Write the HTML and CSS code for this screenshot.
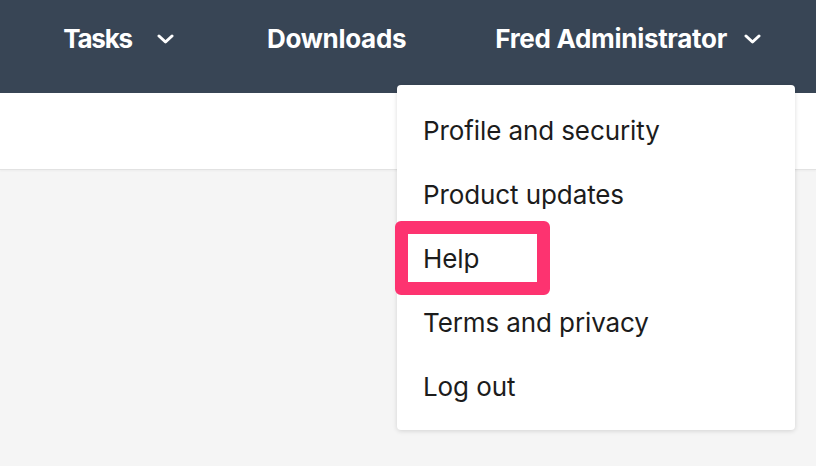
FILE: index.html
```html
<!DOCTYPE html>
<html lang="en">
<head>
<meta charset="utf-8">
<title>Menu</title>
<link rel="stylesheet" href="styles.css">
</head>
<body>
<header class="topbar">
  <nav class="nav">
    <div class="nav-item nav-tasks">
      <span class="nav-label">Tasks</span>
      <svg class="chev" width="17" height="10" viewBox="0 0 17 10"><path d="M2 2 L8.5 8 L15 2" fill="none" stroke="#fff" stroke-width="3" stroke-linecap="round" stroke-linejoin="round"/></svg>
    </div>
    <div class="nav-item nav-downloads"><span class="nav-label">Downloads</span></div>
    <div class="nav-item nav-user">
      <span class="nav-label">Fred Administrator</span>
      <svg class="chev" width="17" height="10" viewBox="0 0 17 10"><path d="M2 2 L8.5 8 L15 2" fill="none" stroke="#fff" stroke-width="3" stroke-linecap="round" stroke-linejoin="round"/></svg>
      <ul class="dropdown">
        <li>Profile and security</li>
        <li>Product updates</li>
        <li class="highlighted">Help</li>
        <li>Terms and privacy</li>
        <li>Log out</li>
      </ul>
    </div>
  </nav>
</header>
<div class="subbar"></div>
<main class="content"></main>
</body>
</html>
```
FILE: styles.css
```css
*, *::before, *::after { box-sizing: border-box; }
html, body {
  margin: 0;
  padding: 0;
  height: 100%;
}
body {
  background: #f5f5f5;
  font-family: Inter, "Noto Sans", sans-serif;
  color: #1c1c1c;
  overflow: hidden;
}
.topbar {
  height: 93px;
  background: #384555;
}
.nav {
  display: flex;
  justify-content: flex-end;
  align-items: center;
  height: 78px;
  padding-right: 55px;
}
.nav-item {
  display: flex;
  align-items: center;
  color: #fff;
  font-weight: 700;
  font-size: 26px;
  line-height: 30px;
  letter-spacing: -0.3px;
}
.nav-tasks .nav-label { letter-spacing: -1.2px; }
.nav-tasks .chev { margin-left: 25px; }
.nav-downloads { margin-left: 93px; }
.nav-user { margin-left: 89px; position: relative; }
.nav-user .chev { margin-left: 17px; }
.chev { display: block; }
.subbar {
  height: 77px;
  background: #fff;
  border-bottom: 1px solid #e2e2e2;
  box-shadow: 0 1px 2px rgba(0,0,0,0.04);
}
.dropdown {
  position: absolute;
  top: 61px;
  right: -34px;
  width: 398px;
  margin: 0;
  padding: 14px 0 11px;
  list-style: none;
  background: #fff;
  border-radius: 4px;
  box-shadow: 0 1px 5px rgba(0,0,0,0.14);
  z-index: 10;
}
.dropdown li {
  position: relative;
  height: 64px;
  padding-left: 26px;
  display: flex;
  align-items: center;
  font-weight: 400;
  font-size: 26px;
  letter-spacing: -0.1px;
  color: #1c1c1c;
}
.dropdown li.highlighted::before {
  content: "";
  position: absolute;
  left: -2px;
  top: -6px;
  width: 155px;
  height: 74px;
  border: 13px solid #fd3370;
  border-radius: 6px;
}
```
